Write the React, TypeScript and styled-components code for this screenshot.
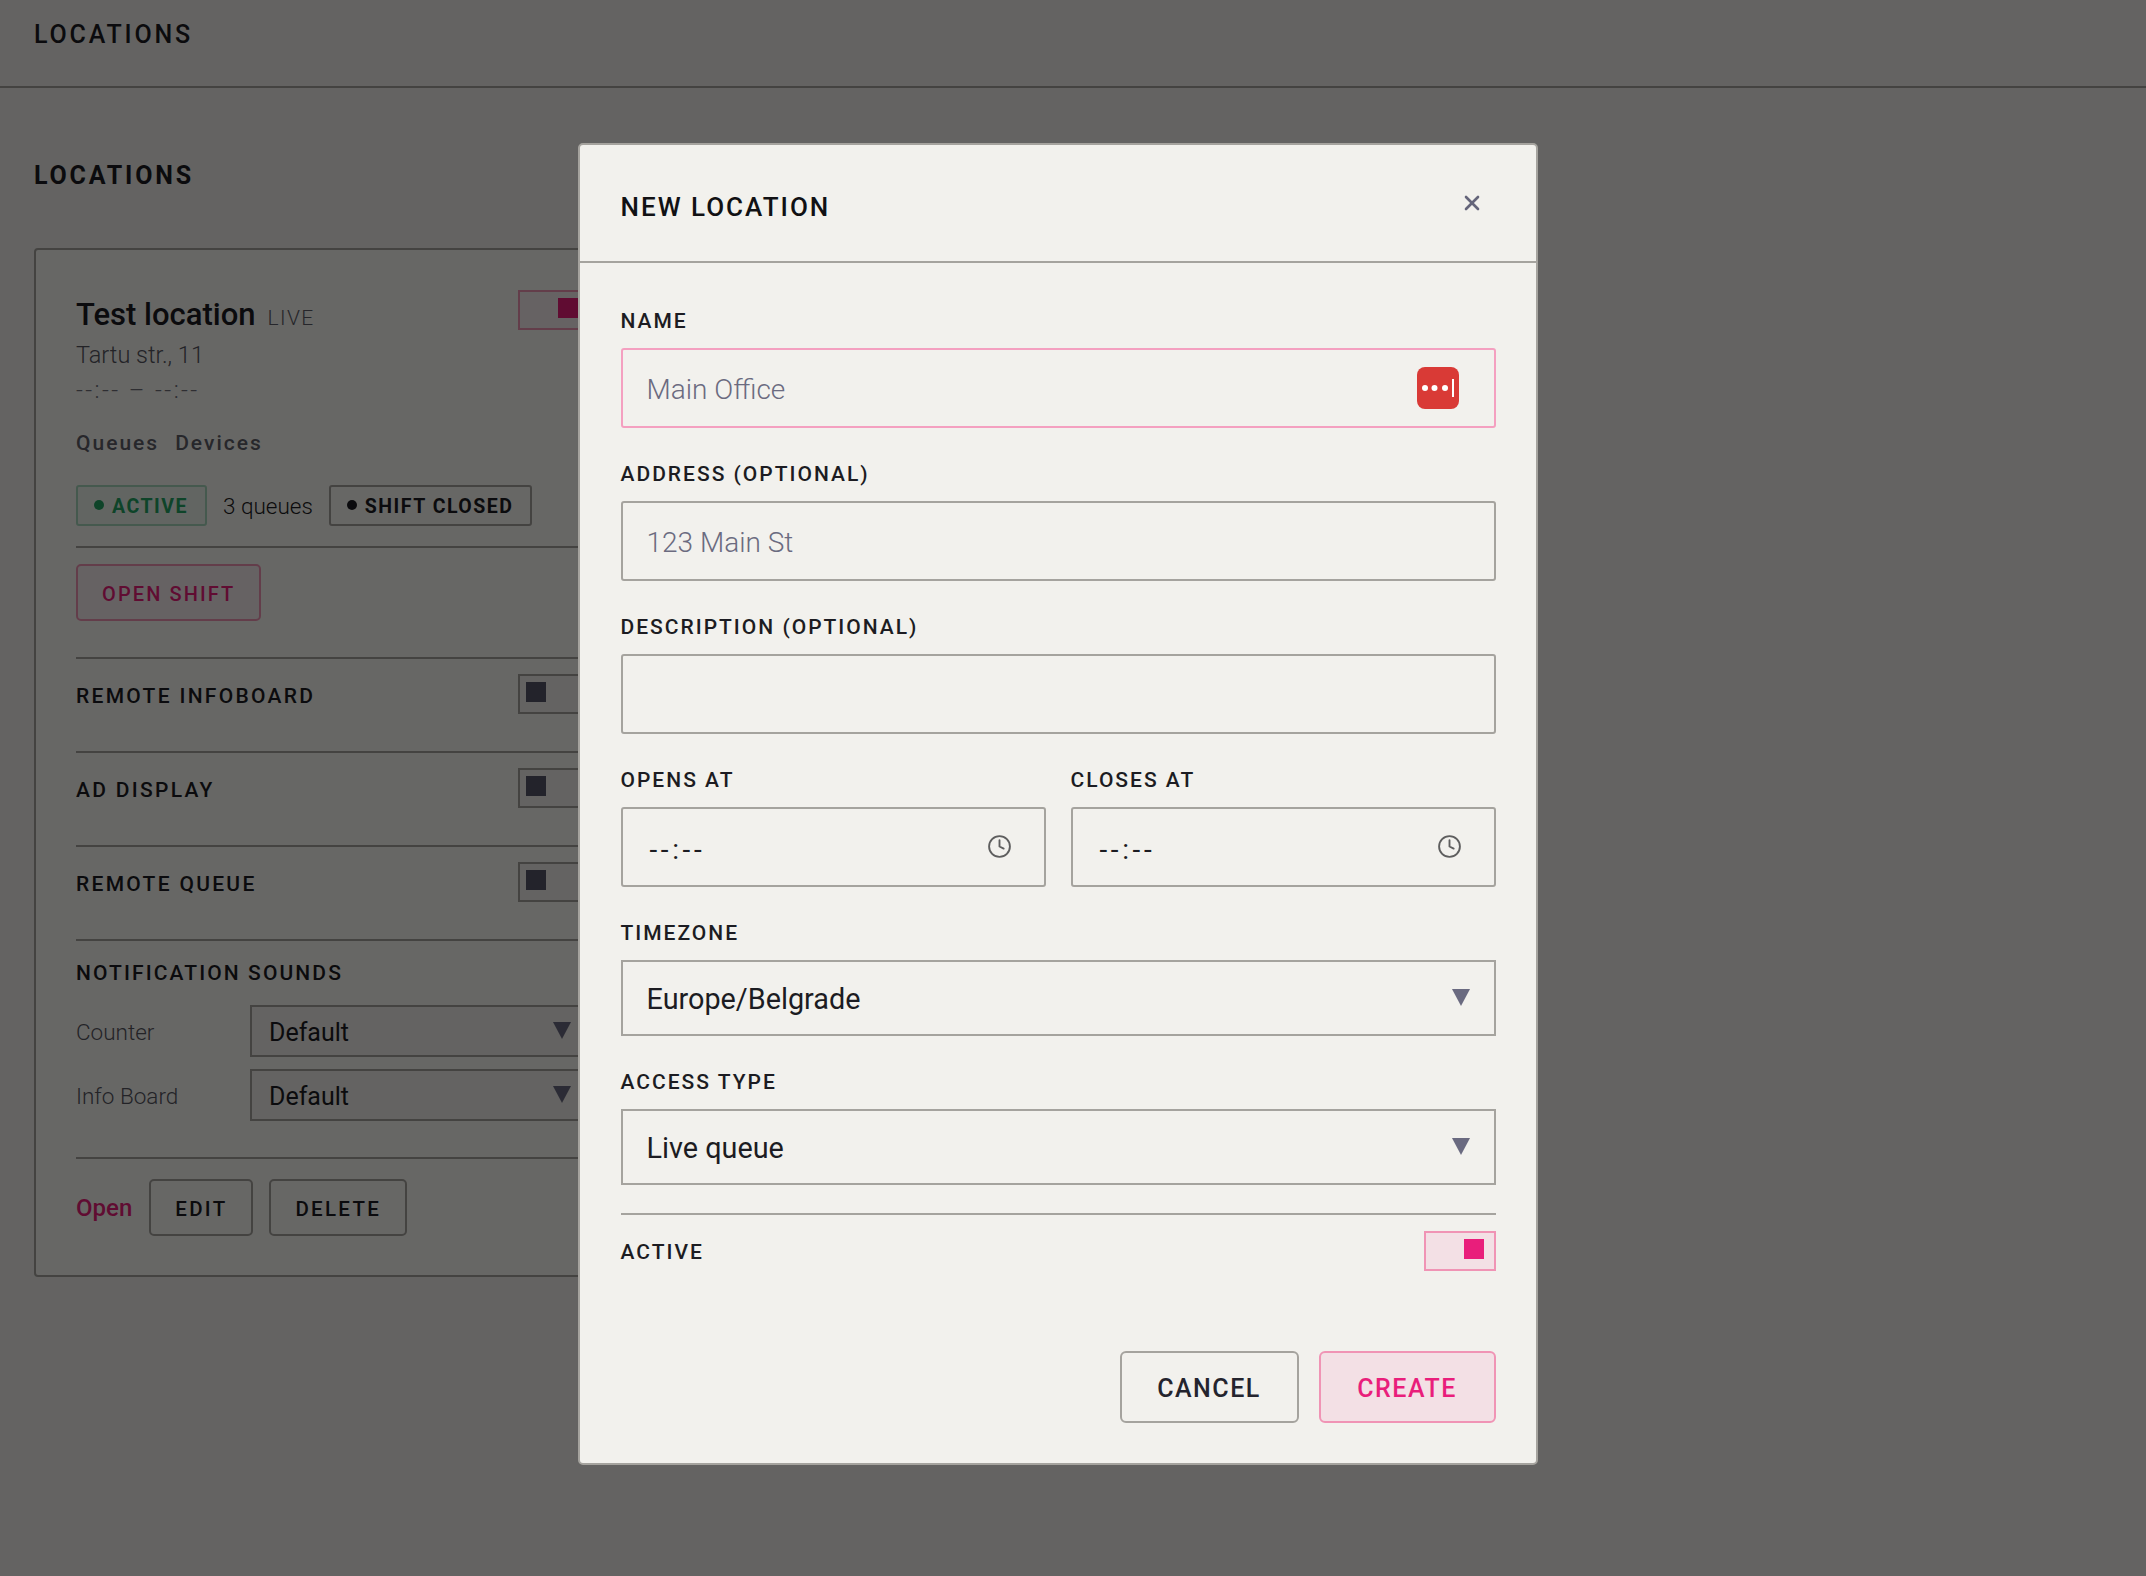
import React from 'react'
import styled, { createGlobalStyle } from 'styled-components'
import { Clock, X } from 'lucide-react'

const GlobalStyle = createGlobalStyle`
  html, body {
    margin: 0;
    background: #f2f1ed;
    font-family: Roboto, "Noto Sans", sans-serif;
    color: #1c1c22;
  }
  * {
    box-sizing: border-box;
  }
`

const Page = styled.div`
  min-height: 1576px;
`

const TopBar = styled.div`
  height: 88px;
  padding: 21px 34px 0;
  border-bottom: 2px solid #a5a39e;
  font-size: 25px;
  line-height: 28px;
  font-weight: 500;
  letter-spacing: 2.8px;
`

const Content = styled.div`
  padding: 0 34px;
`

const PageTitle = styled.h1`
  margin: 0;
  padding-top: 73px;
  height: 160px;
  font-size: 25px;
  line-height: 30px;
  font-weight: 700;
  letter-spacing: 2.8px;
`

const Card = styled.div`
  width: 600px;
  border: 2px solid #a5a39e;
  border-radius: 4px;
  padding: 40px 42px 39px 40px;
  background: #fbfaf6;
`

const CardHead = styled.div`
  display: flex;
  justify-content: space-between;
  align-items: flex-start;
  height: 195px;
`

const CardName = styled.div`
  display: flex;
  align-items: baseline;
  gap: 12px;
  padding-top: 1px;
  font-size: 31px;
  line-height: 48px;
  font-weight: 500;
`

const LiveTag = styled.span`
  font-size: 21px;
  font-weight: 300;
  letter-spacing: 1.4px;
  color: #5e5e68;
`

const Address = styled.div`
  margin-top: -2px;
  font-size: 23.5px;
  line-height: 30px;
  font-weight: 300;
  color: #55555f;
`

const Hours = styled.div`
  margin-top: 7px;
  font-size: 24px;
  line-height: 26px;
  letter-spacing: 2.4px;
  font-weight: 300;
  color: #70707a;
`

const TabRow = styled.div`
  display: flex;
  gap: 16px;
  margin-top: 26px;
  font-size: 21px;
  line-height: 28px;
  font-weight: 500;
  letter-spacing: 2px;
  color: #5f5f6a;
`

const StatusRow = styled.div`
  display: flex;
  align-items: center;
  gap: 16px;
  padding-bottom: 20px;
  border-bottom: 2px solid #a5a39e;
`

const Badge = styled.div<{ $tone: 'green' | 'dark' }>`
  display: flex;
  align-items: center;
  gap: 8px;
  height: 41px;
  padding: 1px 17px 0 16px;
  border: 2px solid ${p => (p.$tone === 'green' ? '#a9d8bd' : '#a5a39e')};
  border-radius: 3px;
  font-size: 19.5px;
  font-weight: 700;
  letter-spacing: 1.5px;
  color: ${p => (p.$tone === 'green' ? '#23a565' : '#1c1c22')};
  background: ${p => (p.$tone === 'green' ? '#eff6ef' : 'transparent')};
`

const Dot = styled.span<{ $tone: 'green' | 'dark' }>`
  width: 10px;
  height: 10px;
  border-radius: 50%;
  margin-top: -3px;
  background: ${p => (p.$tone === 'green' ? '#23a565' : '#1c1c22')};
`

const QueueCount = styled.span`
  font-size: 22.5px;
  font-weight: 300;
`

const ShiftArea = styled.div`
  height: 109px;
  padding-top: 16px;
`

const OutlineButton = styled.button<{ $pink?: boolean }>`
  height: 57px;
  padding: 2px 24px 0;
  border: 2px solid ${p => (p.$pink ? '#f094b5' : '#a5a39e')};
  border-radius: 5px;
  background: ${p => (p.$pink ? '#f8eef0' : 'transparent')};
  color: ${p => (p.$pink ? '#e91e7b' : '#1c1c22')};
  font-family: inherit;
  font-size: 20px;
  font-weight: 500;
  letter-spacing: 2.1px;
`

const CardAction = styled(OutlineButton)`
  font-size: 20.5px;
  letter-spacing: 2.3px;
`

const SwitchRow = styled.div`
  display: flex;
  justify-content: space-between;
  align-items: flex-start;
  height: 94px;
  padding-top: 15px;
  border-top: 2px solid #a5a39e;
`

const RowLabel = styled.div`
  font-size: 21px;
  line-height: 40px;
  font-weight: 500;
  letter-spacing: 2.3px;
  padding-top: 2px;
`

const Toggle = styled.div<{ $on?: boolean; $soft?: boolean }>`
  display: flex;
  justify-content: ${p => (p.$on ? 'flex-end' : 'flex-start')};
  width: 72px;
  height: 40px;
  padding: 6px ${p => (p.$on ? 10 : 6)}px;
  border: 2px solid ${p => (p.$on ? '#f094b5' : '#a5a39e')};
  background: ${p => (p.$soft ? '#f8eef0' : p.$on ? '#f3e0e5' : '#f2f1ed')};
`

const Thumb = styled.span<{ $on?: boolean }>`
  width: 20px;
  height: 20px;
  background: ${p => (p.$on ? '#e91e7b' : '#56566a')};
`

const SoundsBlock = styled.div`
  border-top: 2px solid #a5a39e;
  height: 218px;
`

const SoundsTitle = styled.div`
  font-size: 21px;
  line-height: 28px;
  font-weight: 500;
  letter-spacing: 2.1px;
  padding-top: 18px;
  height: 64px;
`

const SoundRow = styled.div`
  display: grid;
  grid-template-columns: 174px 1fr;
  align-items: center;
  margin-bottom: 12px;
`

const SoundLabel = styled.span`
  padding-top: 2px;
  font-size: 22.5px;
  font-weight: 300;
  color: #55555f;
`

const SmallSelect = styled.div`
  display: flex;
  justify-content: space-between;
  align-items: center;
  height: 52px;
  padding: 2px 17px 0 17px;
  border: 2px solid #a5a39e;
  background: #f2f1ed;
  font-size: 25px;
  font-weight: 400;
`

const Arrow = styled.span`
  width: 0;
  height: 0;
  margin-top: -4px;
  border-left: 9px solid transparent;
  border-right: 9px solid transparent;
  border-top: 17px solid #6a6a80;
`

const CardFooter = styled.div`
  display: flex;
  align-items: center;
  gap: 16px;
  padding-top: 20px;
  border-top: 2px solid #a5a39e;
`

const OpenLink = styled.span`
  font-size: 24px;
  font-weight: 500;
  color: #e91e7b;
  margin-right: 1px;
`

const Overlay = styled.div`
  position: fixed;
  inset: 0;
  display: flex;
  justify-content: center;
  align-items: flex-start;
  padding: 143px 31px 0 0;
  background: rgba(0, 0, 0, 0.59);
`

const Modal = styled.div`
  width: 960px;
  height: 1322px;
  background: #f2f1ed;
  border: 2px solid #a5a39e;
  border-radius: 5px;
`

const ModalHeader = styled.div`
  display: flex;
  justify-content: space-between;
  align-items: center;
  height: 118px;
  padding: 7px 40px 0 41px;
  border-bottom: 2px solid #a5a39e;
`

const ModalTitle = styled.h2`
  margin: 0;
  font-size: 26px;
  font-weight: 500;
  letter-spacing: 2px;
  color: #111114;
`

const CloseButton = styled.button`
  display: flex;
  margin: -7px 12px 0 0;
  padding: 0;
  border: none;
  background: none;
  color: #65657a;
`

const ModalBody = styled.div`
  padding: 45px 40px 0 41px;
`

const Field = styled.div`
  margin-bottom: 33px;
`

const FieldLabel = styled.label`
  display: block;
  height: 25px;
  margin-bottom: 15px;
  font-size: 21px;
  line-height: 26px;
  font-weight: 500;
  letter-spacing: 2px;
`

const InputBox = styled.div<{ $focus?: boolean }>`
  display: flex;
  align-items: center;
  justify-content: space-between;
  height: 80px;
  padding: 0 32px 0 24px;
  border: 2px solid ${p => (p.$focus ? '#f4a0c0' : '#a5a39e')};
  border-radius: 3px;
`

const TextInput = styled.input`
  flex: 1;
  min-width: 0;
  border: none;
  outline: none;
  padding: 2px 0 0;
  background: none;
  font-family: inherit;
  font-size: 28px;
  font-weight: 300;
  color: #1c1c22;

  &::placeholder {
    color: #6b6b80;
    opacity: 1;
  }
`

const TimeGrid = styled.div`
  display: grid;
  grid-template-columns: 1fr 1fr;
  gap: 25px;
`

const TimeValue = styled.span`
  margin-left: 3px;
  padding-top: 4px;
  font-size: 28px;
  letter-spacing: 3.6px;
  font-weight: 400;
`

const TimeIcon = styled(Clock)`
  margin-top: -2px;
`

const BigSelect = styled.div`
  display: flex;
  align-items: center;
  justify-content: space-between;
  height: 76px;
  padding: 2px 24px 0 24px;
  border: 2px solid #a5a39e;
  font-size: 28.8px;
  font-weight: 400;
`

const ActiveBlock = styled.div`
  display: flex;
  justify-content: space-between;
  align-items: flex-start;
  margin-top: -5px;
  padding-top: 16px;
  height: 138px;
  border-top: 2px solid #a5a39e;
`

const ActiveLabel = styled(FieldLabel)`
  margin: 0;
  padding-top: 8px;
  height: auto;
`

const ModalActions = styled.div`
  display: flex;
  justify-content: flex-end;
  gap: 20px;
`

const ActionButton = styled.button<{ $pink?: boolean }>`
  width: ${p => (p.$pink ? 177 : 179)}px;
  height: 72px;
  padding-top: 4px;
  border: 2px solid ${p => (p.$pink ? '#f094b5' : '#a5a39e')};
  border-radius: 6px;
  background: ${p => (p.$pink ? '#f3e0e5' : 'transparent')};
  color: ${p => (p.$pink ? '#e91e7b' : '#24242e')};
  font-family: inherit;
  font-size: 25px;
  font-weight: 500;
  letter-spacing: 1.5px;
`

const PassSlot = styled.div`
  display: flex;
  margin-right: -29px;
  padding-right: 32px;
`

const PassIcon = () => (
  <svg width="42" height="42" viewBox="0 0 42 42">
    <rect width="42" height="42" rx="8" fill="#d93a36" />
    <circle cx="8" cy="21" r="3" fill="#fff" />
    <circle cx="17.5" cy="21" r="3" fill="#fff" />
    <circle cx="28" cy="21" r="3" fill="#fff" />
    <rect x="35" y="12" width="2" height="18" fill="#fff" />
  </svg>
)

const FormField: React.FC<{ label: string; children: React.ReactNode }> = ({ label, children }) => (
  <Field>
    <FieldLabel>{label}</FieldLabel>
    {children}
  </Field>
)

const TimeField: React.FC<{ label: string }> = ({ label }) => (
  <FormField label={label}>
    <InputBox>
      <TimeValue>--:--</TimeValue>
      <TimeIcon size={25} color="#5e5e5e" strokeWidth={1.8} />
    </InputBox>
  </FormField>
)

const switches = ['REMOTE INFOBOARD', 'AD DISPLAY', 'REMOTE QUEUE']
const sounds = ['Counter', 'Info Board']

export default function App() {
  return (
    <>
      <GlobalStyle />
      <Page>
        <TopBar>LOCATIONS</TopBar>
        <Content>
          <PageTitle>LOCATIONS</PageTitle>
          <Card>
            <CardHead>
              <div>
                <CardName>
                  Test location <LiveTag>LIVE</LiveTag>
                </CardName>
                <Address>Tartu str., 11</Address>
                <Hours>--:-- – --:--</Hours>
                <TabRow>
                  <span>Queues</span>
                  <span>Devices</span>
                </TabRow>
              </div>
              <Toggle $on $soft>
                <Thumb $on />
              </Toggle>
            </CardHead>
            <StatusRow>
              <Badge $tone="green">
                <Dot $tone="green" />
                ACTIVE
              </Badge>
              <QueueCount>3 queues</QueueCount>
              <Badge $tone="dark">
                <Dot $tone="dark" />
                SHIFT CLOSED
              </Badge>
            </StatusRow>
            <ShiftArea>
              <OutlineButton $pink>OPEN SHIFT</OutlineButton>
            </ShiftArea>
            {switches.map(name => (
              <SwitchRow key={name}>
                <RowLabel>{name}</RowLabel>
                <Toggle>
                  <Thumb />
                </Toggle>
              </SwitchRow>
            ))}
            <SoundsBlock>
              <SoundsTitle>NOTIFICATION SOUNDS</SoundsTitle>
              {sounds.map(name => (
                <SoundRow key={name}>
                  <SoundLabel>{name}</SoundLabel>
                  <SmallSelect>
                    Default
                    <Arrow />
                  </SmallSelect>
                </SoundRow>
              ))}
            </SoundsBlock>
            <CardFooter>
              <OpenLink>Open</OpenLink>
              <CardAction>EDIT</CardAction>
              <CardAction>DELETE</CardAction>
            </CardFooter>
          </Card>
        </Content>
      </Page>
      <Overlay>
        <Modal>
          <ModalHeader>
            <ModalTitle>NEW LOCATION</ModalTitle>
            <CloseButton aria-label="Close">
              <X size={24} strokeWidth={2.6} />
            </CloseButton>
          </ModalHeader>
          <ModalBody>
            <FormField label="NAME">
              <InputBox $focus>
                <TextInput placeholder="Main Office" />
                <PassSlot>
                  <PassIcon />
                </PassSlot>
              </InputBox>
            </FormField>
            <FormField label="ADDRESS (OPTIONAL)">
              <InputBox>
                <TextInput placeholder="123 Main St" />
              </InputBox>
            </FormField>
            <FormField label="DESCRIPTION (OPTIONAL)">
              <InputBox>
                <TextInput />
              </InputBox>
            </FormField>
            <TimeGrid>
              <TimeField label="OPENS AT" />
              <TimeField label="CLOSES AT" />
            </TimeGrid>
            <FormField label="TIMEZONE">
              <BigSelect>
                Europe/Belgrade
                <Arrow />
              </BigSelect>
            </FormField>
            <FormField label="ACCESS TYPE">
              <BigSelect>
                Live queue
                <Arrow />
              </BigSelect>
            </FormField>
            <ActiveBlock>
              <ActiveLabel>ACTIVE</ActiveLabel>
              <Toggle $on>
                <Thumb $on />
              </Toggle>
            </ActiveBlock>
            <ModalActions>
              <ActionButton>CANCEL</ActionButton>
              <ActionButton $pink>CREATE</ActionButton>
            </ModalActions>
          </ModalBody>
        </Modal>
      </Overlay>
    </>
  )
}
